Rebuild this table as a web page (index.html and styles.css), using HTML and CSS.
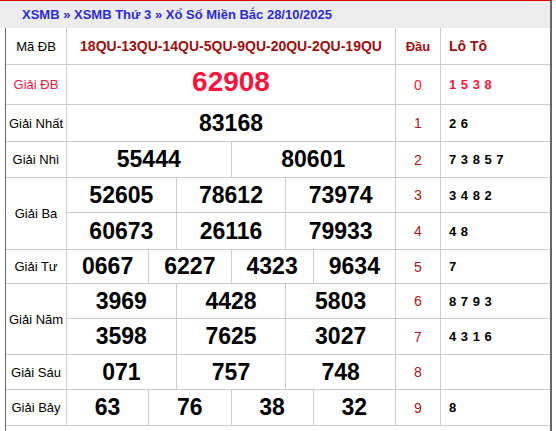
FILE: index.html
```html
<!DOCTYPE html>
<html lang="vi">
<head>
<meta charset="utf-8">
<title>XSMB 28/10/2025</title>
<link rel="stylesheet" href="styles.css">
</head>
<body>
<div class="box">
  <div class="head">XSMB » XSMB Thứ 3 » Xổ Số Miền Bắc 28/10/2025</div>
  <div class="frame">
    <div class="grid">
      <div class="c lbl">Mã ĐB</div>
      <div class="c code s12">18QU-13QU-14QU-5QU-9QU-20QU-2QU-19QU</div>
      <div class="c th">Đầu</div>
      <div class="c th th-lt">Lô Tô</div>

      <div class="c lbl red">Giải ĐB</div>
      <div class="c num db s12">62908</div>
      <div class="c dau red">0</div>
      <div class="c loto red">1 5 3 8</div>

      <div class="c lbl">Giải Nhất</div>
      <div class="c num s12">83168</div>
      <div class="c dau">1</div>
      <div class="c loto">2 6</div>

      <div class="c lbl">Giải Nhì</div>
      <div class="c num s6">55444</div>
      <div class="c num s6">80601</div>
      <div class="c dau">2</div>
      <div class="c loto">7 3 8 5 7</div>

      <div class="c lbl r2">Giải Ba</div>
      <div class="c num s4">52605</div>
      <div class="c num s4">78612</div>
      <div class="c num s4">73974</div>
      <div class="c dau">3</div>
      <div class="c loto">3 4 8 2</div>
      <div class="c num s4">60673</div>
      <div class="c num s4">26116</div>
      <div class="c num s4">79933</div>
      <div class="c dau">4</div>
      <div class="c loto">4 8</div>

      <div class="c lbl">Giải Tư</div>
      <div class="c num s3">0667</div>
      <div class="c num s3">6227</div>
      <div class="c num s3">4323</div>
      <div class="c num s3">9634</div>
      <div class="c dau">5</div>
      <div class="c loto">7</div>

      <div class="c lbl r2">Giải Năm</div>
      <div class="c num s4">3969</div>
      <div class="c num s4">4428</div>
      <div class="c num s4">5803</div>
      <div class="c dau">6</div>
      <div class="c loto">8 7 9 3</div>
      <div class="c num s4">3598</div>
      <div class="c num s4">7625</div>
      <div class="c num s4">3027</div>
      <div class="c dau">7</div>
      <div class="c loto">4 3 1 6</div>

      <div class="c lbl">Giải Sáu</div>
      <div class="c num s4">071</div>
      <div class="c num s4">757</div>
      <div class="c num s4">748</div>
      <div class="c dau">8</div>
      <div class="c loto"></div>

      <div class="c lbl">Giải Bảy</div>
      <div class="c num s3">63</div>
      <div class="c num s3">76</div>
      <div class="c num s3">38</div>
      <div class="c num s3">32</div>
      <div class="c dau">9</div>
      <div class="c loto">8</div>
    </div>
  </div>
</div>
</body>
</html>
```

FILE: styles.css
```css
html, body {
  margin: 0;
  padding: 0;
  background: #fff;
}
body {
  font-family: "Liberation Sans", Arial, sans-serif;
  color: #000;
}
.box {
  width: 550px;
  border-top: 1px solid #d40000;
  border-right: 2px solid #666;
}
.head {
  height: 27px;
  line-height: 27px;
  background: #ececec;
  padding-left: 22px;
  font-size: 13px;
  font-weight: bold;
  color: #2b2bd3;
}
.frame {
  margin-left: 5px;
  border-left: 1px solid #666;
  padding-bottom: 12px;
}
.grid {
  display: grid;
  grid-template-columns: 60px repeat(12, minmax(0, 1fr)) 44px 109px;
  grid-template-rows: 36px 39px 36px 35px 34px 36px 33px 34px 35px 34px 35px;
  gap: 1px;
  background: #ccc;
  border-bottom: 1px solid #ccc;
}
.c {
  background: #fff;
  display: flex;
  align-items: center;
  justify-content: center;
  white-space: nowrap;
}
.s12 { grid-column: span 12; }
.s6 { grid-column: span 6; }
.s4 { grid-column: span 4; }
.s3 { grid-column: span 3; }
.r2 { grid-row: span 2; }

.lbl {
  font-size: 13px;
}
.lbl.red { color: #f7163d; }
.code {
  font-size: 14px;
  font-weight: bold;
  color: #9b0f0f;
}
.th {
  font-size: 13px;
  font-weight: bold;
  color: #9b0f0f;
}
.th-lt {
  justify-content: flex-start;
  padding-left: 8px;
  font-size: 14px;
}
.num {
  font-size: 23px;
  font-weight: bold;
}
.num.db {
  font-size: 28px;
  color: #f7163d;
  padding-bottom: 5px;
}
.dau {
  font-size: 14px;
  color: #a31818;
}
.dau.red { color: #f7163d; }
.loto {
  justify-content: flex-start;
  padding-left: 8px;
  font-size: 13px;
  font-weight: bold;
  letter-spacing: 0.5px;
}
.loto.red { color: #f7163d; }
```
